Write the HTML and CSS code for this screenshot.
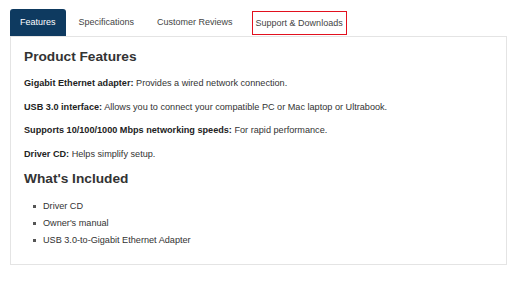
FILE: index.html
```html
<!DOCTYPE html>
<html>
<head>
    <title>Product Details</title>
    <meta charset="UTF-8">
    <meta name="viewport" content="width=device-width, initial-scale=1.0">
    <link rel="stylesheet" href="styles.css">
</head>
<body>
    <div class="container">
        <ul class="tabs">
            <li class="tab active">Features</li>
            <li class="tab">Specifications</li>
            <li class="tab">Customer Reviews</li>
            <li class="tab tab-support"><span class="highlight">Support &amp; Downloads</span></li>
        </ul>

        <div class="tab-panel">
            <h2>Product Features</h2>
            <p><strong>Gigabit Ethernet adapter:</strong> Provides a wired network connection.</p>
            <p><strong>USB 3.0 interface:</strong> Allows you to connect your compatible PC or Mac laptop or Ultrabook.</p>
            <p><strong>Supports 10/100/1000 Mbps networking speeds:</strong> For rapid performance.</p>
            <p><strong>Driver CD:</strong> Helps simplify setup.</p>

            <h2>What's Included</h2>
            <ul class="included">
                <li>Driver CD</li>
                <li>Owner's manual</li>
                <li>USB 3.0-to-Gigabit Ethernet Adapter</li>
            </ul>
        </div>
    </div>
</body>
</html>
```

FILE: styles.css
```css
body {
    font-family: "Liberation Sans", Arial, sans-serif;
    margin: 0;
    background-color: white;
    color: #333;
}
.container {
    width: 497px;
    padding: 9px 0 0 10px;
}
.tabs {
    display: flex;
    list-style: none;
    margin: 0;
    padding: 0;
    border-bottom: 1px solid #e4e4e4;
}
.tab {
    font-size: 9px;
    line-height: 27px;
    padding: 0 10px;
    margin-right: 3px;
    color: #444;
    border-radius: 3px 3px 0 0;
}
.tab.active {
    background-color: #0e3a60;
    color: white;
}
.tab-support {
    padding: 0 6px;
    display: flex;
    align-items: center;
}
.highlight {
    border: 1px solid #e2101e;
    padding: 0 3px;
    line-height: 22px;
}
.tab-panel {
    border: 1px solid #e4e4e4;
    border-top: none;
    padding: 12px 13px 18px 13px;
}
h2 {
    font-size: 13.7px;
    line-height: 16px;
    margin: 0 0 12px 0;
    color: #333;
}
p {
    font-size: 9.15px;
    line-height: 12px;
    margin: 0 0 11.5px 0;
}
p strong {
    color: #222;
}
.included {
    list-style: none;
    margin: 0;
    padding: 1px 0 0 19px;
}
.included li {
    position: relative;
    font-size: 9.15px;
    line-height: 12px;
    margin-bottom: 5px;
}
.included li:last-child {
    margin-bottom: 0;
}
.included li::before {
    content: "";
    position: absolute;
    left: -10px;
    top: 5px;
    width: 3px;
    height: 3px;
    background-color: #555;
}
```
